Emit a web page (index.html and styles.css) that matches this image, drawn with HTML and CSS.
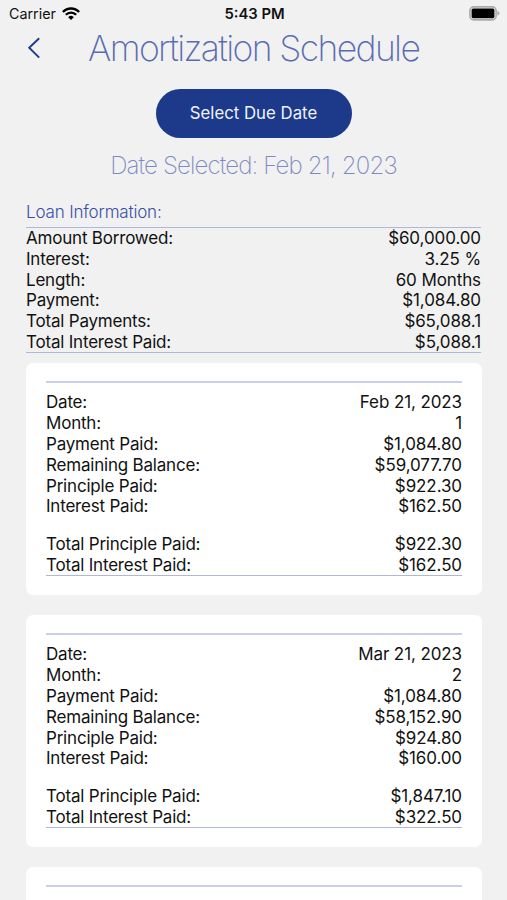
FILE: index.html
```html
<!DOCTYPE html>
<html lang="en">
<head>
    <meta charset="UTF-8">
    <meta name="viewport" content="width=device-width, initial-scale=1.0">
    <title>Amortization Schedule</title>
    <link rel="stylesheet" href="styles.css">
</head>
<body>
    <div class="status-bar">
        <div class="carrier">
            <span>Carrier</span>
            <svg class="wifi" width="18" height="13" viewBox="0 0 18 13">
                <path d="M0.9 5 A11.2 11.2 0 0 1 17.1 5" fill="none" stroke="#000" stroke-width="2.4"/>
                <path d="M3.8 7.8 A7.2 7.2 0 0 1 14.2 7.8" fill="none" stroke="#000" stroke-width="2.2"/>
                <path d="M9 13 L6.2 10.2 A4 4 0 0 1 11.8 10.2 Z"/>
            </svg>
        </div>
        <div class="time">5:43 PM</div>
        <svg class="battery" width="31" height="15" viewBox="0 0 31 15">
            <rect x="0.9" y="0.9" width="26.2" height="13" rx="3.8" fill="#f1f1f1" stroke="#aaa" stroke-width="1.6"/>
            <rect x="2.6" y="2.6" width="22.8" height="9.6" rx="1.6"/>
            <path d="M28.4 4.8 Q30.4 5.5 30.4 7.2 Q30.4 8.9 28.4 9.6 Z" fill="#aaa"/>
        </svg>
    </div>

    <header class="header">
        <svg class="back" width="14" height="22" viewBox="0 0 14 22">
            <path d="M12.2 1.2 L2.2 10.8 L12.2 20.6" fill="none" stroke="#1f3b8c" stroke-width="1.9"/>
        </svg>
        <h1>Amortization Schedule</h1>
    </header>

    <button class="btn-date">Select Due Date</button>
    <p class="selected">Date Selected: Feb 21, 2023</p>

    <section class="loan">
        <h2>Loan Information:</h2>
        <div class="loan-rows">
            <div class="row"><span>Amount Borrowed:</span><span>$60,000.00</span></div>
            <div class="row"><span>Interest:</span><span>3.25 %</span></div>
            <div class="row"><span>Length:</span><span>60 Months</span></div>
            <div class="row"><span>Payment:</span><span>$1,084.80</span></div>
            <div class="row"><span>Total Payments:</span><span>$65,088.1</span></div>
            <div class="row"><span>Total Interest Paid:</span><span>$5,088.1</span></div>
        </div>
    </section>

    <main class="schedule">
        <div class="card">
            <div class="card-rows">
                <div class="row"><span>Date:</span><span>Feb 21, 2023</span></div>
                <div class="row"><span>Month:</span><span>1</span></div>
                <div class="row"><span>Payment Paid:</span><span>$1,084.80</span></div>
                <div class="row"><span>Remaining Balance:</span><span>$59,077.70</span></div>
                <div class="row"><span>Principle Paid:</span><span>$922.30</span></div>
                <div class="row"><span>Interest Paid:</span><span>$162.50</span></div>
                <div class="row total"><span>Total Principle Paid:</span><span>$922.30</span></div>
                <div class="row"><span>Total Interest Paid:</span><span>$162.50</span></div>
            </div>
        </div>
        <div class="card">
            <div class="card-rows">
                <div class="row"><span>Date:</span><span>Mar 21, 2023</span></div>
                <div class="row"><span>Month:</span><span>2</span></div>
                <div class="row"><span>Payment Paid:</span><span>$1,084.80</span></div>
                <div class="row"><span>Remaining Balance:</span><span>$58,152.90</span></div>
                <div class="row"><span>Principle Paid:</span><span>$924.80</span></div>
                <div class="row"><span>Interest Paid:</span><span>$160.00</span></div>
                <div class="row total"><span>Total Principle Paid:</span><span>$1,847.10</span></div>
                <div class="row"><span>Total Interest Paid:</span><span>$322.50</span></div>
            </div>
        </div>
        <div class="card last">
            <div class="card-rows"></div>
        </div>
    </main>
</body>
</html>
```
FILE: styles.css
```css
* {
    box-sizing: border-box;
}

body {
    margin: 0;
    height: 900px;
    overflow: hidden;
    display: flex;
    flex-direction: column;
    background-color: #f1f1f1;
    font-family: Inter, "Liberation Sans", sans-serif;
    font-size: 17px;
    color: #111;
}

.status-bar {
    display: grid;
    grid-template-columns: 1fr auto 1fr;
    align-items: center;
    height: 27px;
    padding: 0 7px 0 9px;
    font-size: 14.3px;
    flex-shrink: 0;
}

.carrier {
    display: flex;
    align-items: center;
    gap: 6px;
}

.time {
    font-weight: 600;
    font-size: 14.8px;
}

.battery {
    justify-self: end;
}

.header {
    display: flex;
    align-items: center;
    height: 42px;
    padding-left: 27px;
    flex-shrink: 0;
}

.header h1 {
    margin: 1px 0 0 47px;
    font-size: 35.5px;
    font-weight: 200;
    line-height: 42px;
    letter-spacing: -1.62px;
    color: #5a6bb0;
    white-space: nowrap;
}

.btn-date {
    align-self: center;
    width: 196px;
    height: 49px;
    margin-top: 20px;
    padding: 0 0 1px;
    border: none;
    border-radius: 25px;
    background-color: #1d3989;
    color: #eef3ff;
    font-family: inherit;
    font-size: 16.8px;
    flex-shrink: 0;
}

.selected {
    margin: 13px 0 0;
    font-size: 24px;
    font-weight: 200;
    line-height: 30px;
    letter-spacing: -0.84px;
    text-align: center;
    color: #7f8ac2;
    white-space: nowrap;
}

.loan {
    margin: 19px 26px 0;
}

.loan h2 {
    margin: 0;
    font-size: 17px;
    font-weight: 300;
    line-height: 24px;
    letter-spacing: -0.16px;
    color: #3a50a5;
}

.loan-rows {
    height: 126px;
    margin-top: 3px;
    border-top: 1px solid #b0b8da;
    border-bottom: 1px solid #b0b8da;
}

.row {
    display: flex;
    justify-content: space-between;
    line-height: 20.8px;
    height: 20.8px;
    letter-spacing: -0.2px;
}

.row span:last-child {
    letter-spacing: -0.1px;
}

.total {
    margin-top: 17px;
}

.schedule {
    display: flex;
    flex-direction: column;
    gap: 20px;
    margin: 10px 25px 0 26px;
}

.card {
    height: 232px;
    padding: 18px 20px 0;
    border-radius: 7px;
    background-color: #fff;
    flex-shrink: 0;
}

/* only the top of this card shows above the fold */
.card.last {
    height: 33px;
    border-radius: 7px 7px 0 0;
    overflow: hidden;
}

.card-rows {
    height: 195px;
    padding-top: 9.4px;
    border-top: 2px solid #c8cfe6;
    border-bottom: 1px solid #b0b8da;
}
```
